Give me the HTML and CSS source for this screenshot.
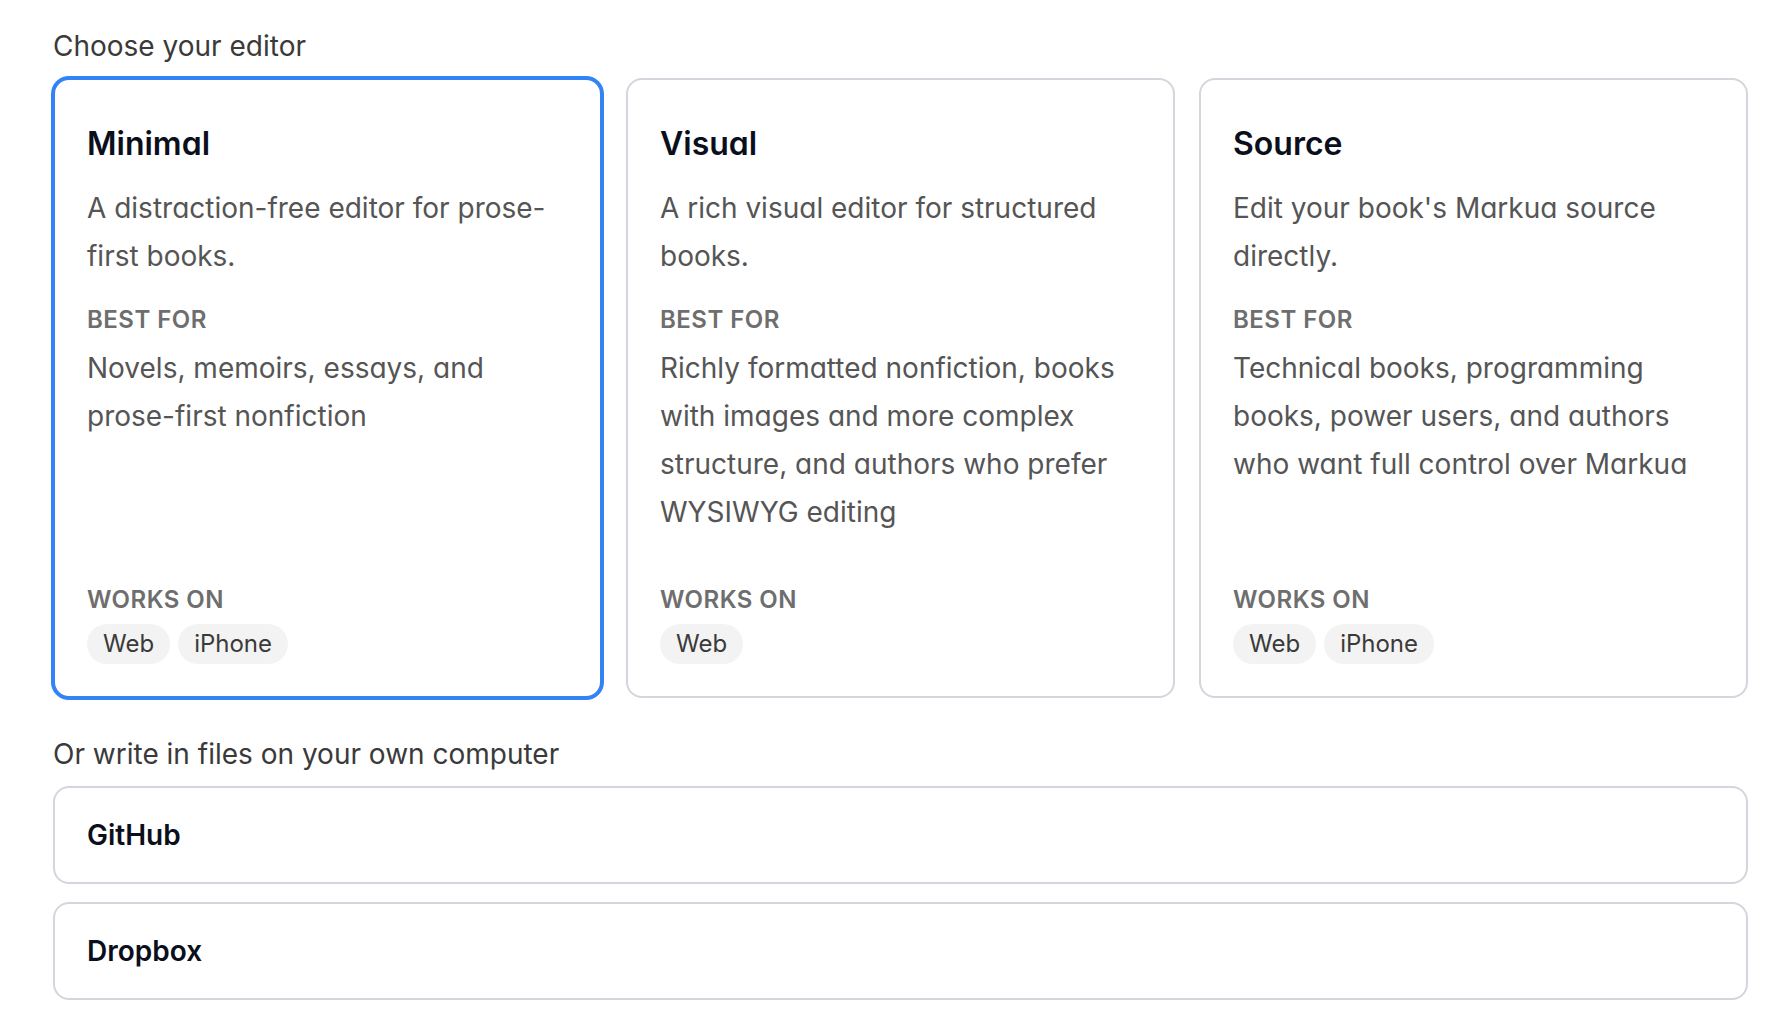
FILE: index.html
```html
<!DOCTYPE html>
<html lang="en">
<head>
<meta charset="utf-8">
<title>Choose your editor</title>
<link rel="stylesheet" href="styles.css">
</head>
<body>
<main class="page">
  <h2 class="section-title">Choose your editor</h2>
  <div class="editor-grid">
    <div class="editor-card is-selected">
      <h3 class="editor-name">Minimal</h3>
      <p class="editor-desc">A distraction-free editor for prose-first books.</p>
      <div class="editor-label">Best for</div>
      <p class="editor-text">Novels, memoirs, essays, and prose-first nonfiction</p>
      <div class="works-on">
        <div class="editor-label">Works on</div>
        <div class="chips">
          <span class="chip">Web</span>
          <span class="chip">iPhone</span>
        </div>
      </div>
    </div>
    <div class="editor-card">
      <h3 class="editor-name">Visual</h3>
      <p class="editor-desc">A rich visual editor for structured books.</p>
      <div class="editor-label">Best for</div>
      <p class="editor-text">Richly formatted nonfiction, books with images and more complex structure, and authors who prefer WYSIWYG editing</p>
      <div class="works-on">
        <div class="editor-label">Works on</div>
        <div class="chips">
          <span class="chip">Web</span>
        </div>
      </div>
    </div>
    <div class="editor-card">
      <h3 class="editor-name">Source</h3>
      <p class="editor-desc">Edit your book's Markua source directly.</p>
      <div class="editor-label">Best for</div>
      <p class="editor-text">Technical books, programming books, power users, and authors who want full control over Markua</p>
      <div class="works-on">
        <div class="editor-label">Works on</div>
        <div class="chips">
          <span class="chip">Web</span>
          <span class="chip">iPhone</span>
        </div>
      </div>
    </div>
  </div>

  <h2 class="section-title section-title--spaced">Or write in files on your own computer</h2>
  <div class="provider-list">
    <div class="provider">GitHub</div>
    <div class="provider">Dropbox</div>
  </div>
</main>
</body>
</html>
```

FILE: styles.css
```css
* {
  box-sizing: border-box;
}

html,
body {
  margin: 0;
  background: #ffffff;
}

body {
  font-family: Inter, "Noto Sans", "Liberation Sans", sans-serif;
  font-feature-settings: "cv11" 1;
  color: #1f2330;
}

.page {
  padding: 26px 44px 40px 53px;
}

.section-title {
  margin: 0 0 12px;
  font-size: 28px;
  line-height: 40px;
  font-weight: 400;
  color: #3a3a3a;
}

.section-title--spaced {
  margin-top: 36px;
}

/* three editor cards */
.editor-grid {
  display: grid;
  grid-template-columns: repeat(3, 1fr);
  gap: 24px;
}

.editor-card {
  display: flex;
  flex-direction: column;
  border: 2px solid #d3d6dc;
  border-radius: 16px;
  padding: 40px 32px 32px;
  background: #ffffff;
}

.editor-card.is-selected {
  border-color: #3283f6;
  box-shadow: 0 0 0 2px #3283f6;
}

.editor-name {
  margin: 0;
  font-size: 32px;
  line-height: 48px;
  font-weight: 600;
  color: #0b0f1c;
}

.editor-desc {
  margin: 16px 0 0;
  font-size: 28px;
  line-height: 48px;
  color: #555555;
}

.editor-label {
  margin-top: 24px;
  font-size: 24px;
  line-height: 32px;
  font-weight: 600;
  letter-spacing: 0.02em;
  text-transform: uppercase;
  color: #6e6e6e;
}

.editor-text {
  margin: 8px 0 0;
  font-size: 28px;
  line-height: 48px;
  color: #555555;
}

.works-on {
  margin-top: auto;
  padding-top: 48px;
}

.works-on .editor-label {
  margin-top: 0;
}

.chips {
  display: flex;
  gap: 8px;
  margin-top: 8px;
}

.chip {
  height: 40px;
  padding: 0 16px;
  border-radius: 20px;
  background: #f3f3f3;
  font-size: 24px;
  line-height: 40px;
  color: #3a3a3a;
}

/* local file providers */
.provider-list {
  display: flex;
  flex-direction: column;
  gap: 18px;
}

.provider {
  display: flex;
  align-items: center;
  height: 98px;
  padding: 0 32px;
  border: 2px solid #d3d6dc;
  border-radius: 16px;
  font-size: 28px;
  font-weight: 600;
  color: #0b0f1c;
}
```
